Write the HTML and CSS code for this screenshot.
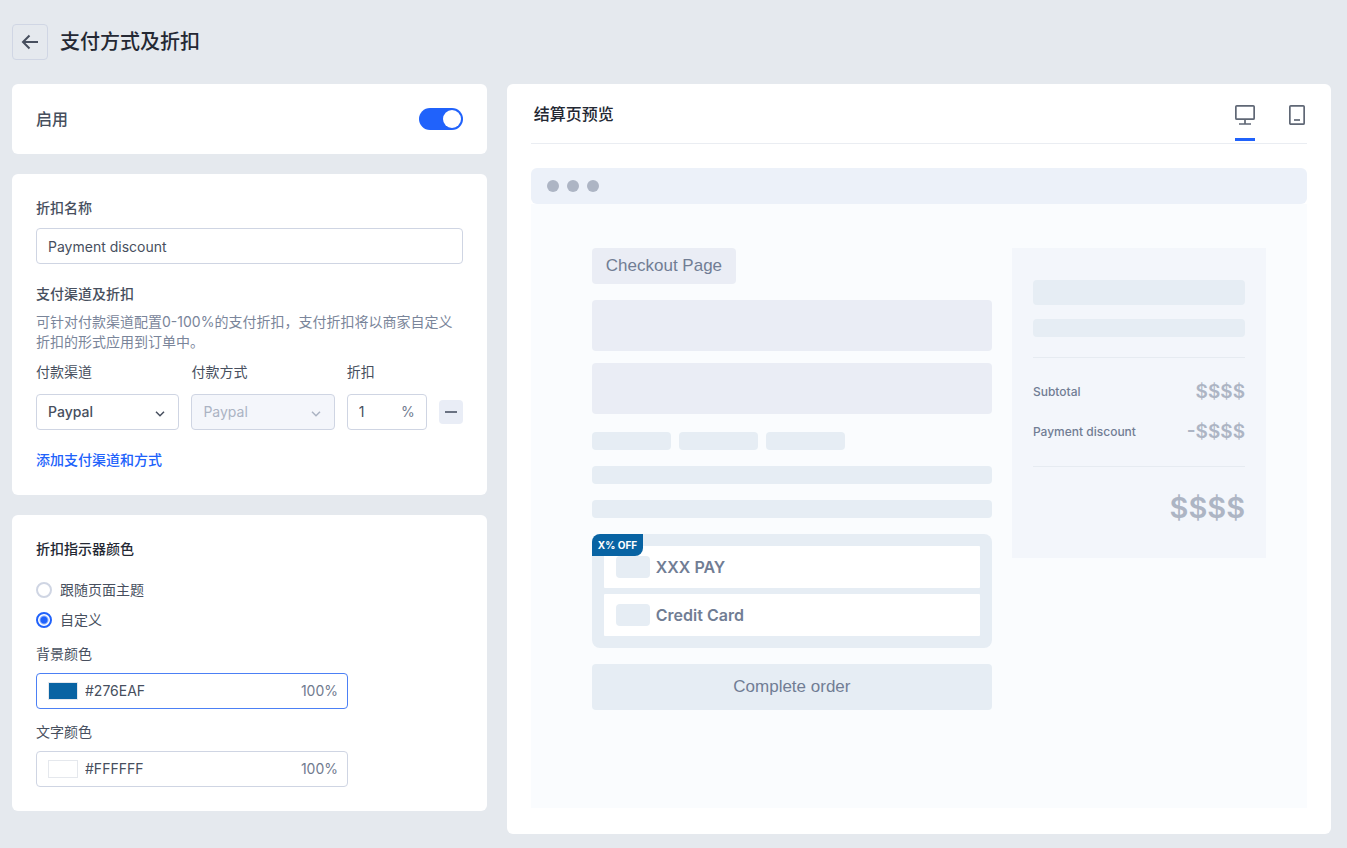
FILE: index.html
```html
<!DOCTYPE html>
<html lang="zh-CN">
<head>
    <meta charset="UTF-8">
    <title>支付方式及折扣</title>
    <link rel="stylesheet" href="styles.css">
</head>
<body>
<div class="page">
    <header class="header">
        <button class="back" type="button" aria-label="返回">
            <svg width="18" height="16" viewBox="0 0 18 16" fill="none" stroke="currentColor" stroke-width="2"><path d="M17 8H2M8.5 1.5L2 8L8.5 14.5"/></svg>
        </button>
        <h1>支付方式及折扣</h1>
    </header>

    <main class="main">
        <div class="settings">
            <section class="card enable">
                <label for="enable">启用</label>
                <input class="switch" type="checkbox" id="enable" checked>
            </section>

            <section class="card discount">
                <label class="label strong" for="name">折扣名称</label>
                <input class="text" type="text" id="name" value="Payment discount">

                <h2 class="sub-title">支付渠道及折扣</h2>
                <p class="desc">可针对付款渠道配置0-100%的支付折扣，支付折扣将以商家自定义折扣的形式应用到订单中。</p>
                <div class="channels">
                    <label for="channel">付款渠道</label>
                    <label for="method">付款方式</label>
                    <label for="rate">折扣</label>
                    <span></span>
                    <div class="select">
                        <select id="channel"><option>Paypal</option></select>
                        <svg width="10" height="6" viewBox="0 0 10 6" fill="none" stroke="currentColor" stroke-width="1.5"><path d="M1 .8L5 4.8L9 .8"/></svg>
                    </div>
                    <div class="select disabled">
                        <select id="method" disabled><option>Paypal</option></select>
                        <svg width="10" height="6" viewBox="0 0 10 6" fill="none" stroke="currentColor" stroke-width="1.5"><path d="M1 .8L5 4.8L9 .8"/></svg>
                    </div>
                    <div class="field rate">
                        <input type="text" id="rate" value="1">
                        <span>%</span>
                    </div>
                    <button class="remove" type="button" aria-label="删除"></button>
                </div>
                <a class="add" href="#">添加支付渠道和方式</a>
            </section>

            <section class="card colors">
                <h2>折扣指示器颜色</h2>
                <label class="radio"><input type="radio" name="theme">跟随页面主题</label>
                <label class="radio"><input type="radio" name="theme" checked>自定义</label>
                <label class="label" for="bg">背景颜色</label>
                <div class="field color active">
                    <input type="color" value="#0863a3" aria-label="背景颜色">
                    <input type="text" id="bg" value="#276EAF">
                    <span>100%</span>
                </div>
                <label class="label" for="fg">文字颜色</label>
                <div class="field color">
                    <input type="color" value="#ffffff" aria-label="文字颜色">
                    <input type="text" id="fg" value="#FFFFFF">
                    <span>100%</span>
                </div>
            </section>
        </div>

        <section class="card preview">
            <div class="preview-head">
                <h2>结算页预览</h2>
                <div class="tabs">
                    <button class="tab current" type="button" aria-label="桌面端">
                        <svg width="20" height="20" viewBox="0 0 20 20" fill="none" stroke="currentColor" stroke-width="1.7"><rect x=".85" y=".85" width="18.3" height="13.3" rx="1"/><path d="M10 14v5M4 19h12"/></svg>
                    </button>
                    <button class="tab" type="button" aria-label="移动端">
                        <svg width="20" height="20" viewBox="0 0 20 20" fill="none" stroke="currentColor" stroke-width="1.7"><rect x="2.85" y=".85" width="14.3" height="18.3" rx="1"/><path d="M7 15h6"/></svg>
                    </button>
                </div>
            </div>

            <div class="browser">
                <div class="bar"><i></i><i></i><i></i></div>
                <div class="body">
                    <div class="checkout">
                        <div class="tag">Checkout Page</div>
                        <div class="block"></div>
                        <div class="block"></div>
                        <div class="pills"><i></i><i></i><i></i></div>
                        <div class="line"></div>
                        <div class="line"></div>
                        <div class="pay">
                            <span class="badge">X% OFF</span>
                            <div class="pay-item"><i></i>XXX PAY</div>
                            <div class="pay-item"><i></i>Credit Card</div>
                        </div>
                        <div class="complete">Complete order</div>
                    </div>
                    <div class="summary">
                        <div class="line big"></div>
                        <div class="line"></div>
                        <div class="rows">
                            <div class="row"><span>Subtotal</span><b>$$$$</b></div>
                            <div class="row"><span>Payment discount</span><b>-$$$$</b></div>
                        </div>
                        <div class="total">$$$$</div>
                    </div>
                </div>
            </div>
        </section>
    </main>
</div>
</body>
</html>
```
FILE: styles.css
```css
*{
    margin: 0;
    padding: 0;
    box-sizing: border-box;
}
body{
    background: #e5e9ee;
    color: #474f5e;
    font: 14px/22px Inter, "Noto Sans CJK SC", sans-serif;
}
input, select, button{
    font: inherit;
    color: inherit;
    border: none;
    outline: none;
    background: none;
}
i{
    display: block;
}
svg{
    display: block;
}
.page{
    padding: 24px 16px 14px 12px;
}
.header{
    display: flex;
    align-items: center;
    gap: 12px;
    margin-bottom: 24px;
}
.header h1{
    font-size: 20px;
    line-height: 28px;
    font-weight: 500;
    color: #242833;
}
.back{
    width: 36px;
    height: 36px;
    border: 1px solid #d0d6e4;
    border-radius: 4px;
    display: flex;
    align-items: center;
    justify-content: center;
}
.main{
    display: flex;
    align-items: flex-start;
    gap: 20px;
}
.settings{
    width: 36%;
    display: flex;
    flex-direction: column;
    gap: 20px;
}
.card{
    background: #fff;
    border-radius: 6px;
    padding: 24px;
}
.card h2{
    font-size: 14px;
    line-height: 20px;
    font-weight: 500;
    color: #242833;
}

/* 启用开关 */
.enable{
    display: flex;
    justify-content: space-between;
    align-items: center;
    font-size: 16px;
    font-weight: 500;
}
.switch{
    appearance: none;
    width: 44px;
    height: 22px;
    padding: 2px;
    border-radius: 11px;
    background: #c4cad6;
    display: flex;
    cursor: pointer;
}
.switch::before{
    content: "";
    width: 18px;
    height: 18px;
    border-radius: 50%;
    background: #fff;
}
.switch:checked{
    background: #2062fb;
    justify-content: flex-end;
}

/* 折扣设置 */
.discount{
    padding-bottom: 25px;
    line-height: 20px;
}
.label{
    display: block;
}
.strong, .card .sub-title{
    font-weight: 500;
    color: #474f5e;
}
.text{
    display: block;
    width: 100%;
    height: 36px;
    margin: 10px 0 20px;
    padding: 0 11px;
    border: 1px solid #cfd5e3;
    border-radius: 4px;
}
.desc{
    margin: 8px 0 10px;
    color: #7a859a;
}
.channels{
    display: grid;
    grid-template-columns: 1fr 1fr 80px 24px;
    gap: 12px;
    align-items: center;
}
.select{
    position: relative;
}
.select select{
    appearance: none;
    display: block;
    width: 100%;
    height: 36px;
    padding: 0 11px;
    border: 1px solid #cfd5e3;
    border-radius: 4px;
    font-weight: 500;
    opacity: 1;
}
.select svg{
    position: absolute;
    right: 14px;
    top: 17px;
    pointer-events: none;
}
.select.disabled select{
    background: #f4f6fb;
    font-weight: 400;
}
.disabled{
    color: #abb3c3;
}
.field{
    display: flex;
    align-items: center;
    height: 36px;
    padding: 0 11px;
    border: 1px solid #cfd5e3;
    border-radius: 4px;
}
.field input[type=text]{
    flex: 1;
    min-width: 0;
}
.field span{
    color: #717b8f;
}
.remove{
    width: 24px;
    height: 24px;
    border-radius: 4px;
    background: #e9edf6;
}
.remove::before{
    content: "";
    display: block;
    width: 12px;
    height: 2px;
    margin: 0 auto;
    background: #6a7282;
}
.add{
    display: block;
    margin-top: 20px;
    color: #2062fb;
    font-weight: 500;
    text-decoration: none;
}

/* 颜色 */
.colors h2{
    margin-bottom: 20px;
}
.radio{
    display: flex;
    align-items: center;
    gap: 8px;
    margin-bottom: 8px;
}
.radio input{
    appearance: none;
    width: 16px;
    height: 16px;
    border: 2px solid #cfd5e3;
    border-radius: 50%;
}
.radio input:checked{
    border-color: #2062fb;
    background: radial-gradient(#2062fb 3px, #fff 5px);
}
.colors .label{
    margin: 12px 0 8px;
}
.color{
    width: 312px;
    max-width: 100%;
    gap: 7px;
    padding-right: 9px;
}
.color.active{
    border-color: #4c80f5;
}
.color input[type=color]{
    appearance: none;
    width: 30px;
    height: 18px;
    border: 1px solid #e5e8ed;
}
.color input::-webkit-color-swatch-wrapper{
    padding: 0;
}
.color input::-webkit-color-swatch{
    border: none;
}

/* 预览 */
.preview{
    flex: 1;
    padding: 0 24px 26px;
}
.preview-head{
    display: flex;
    justify-content: space-between;
    height: 60px;
    padding-left: 3px;
    margin-bottom: 24px;
    border-bottom: 1px solid #eaedf2;
}
.preview-head h2{
    font-size: 16px;
    line-height: 60px;
}
.tabs{
    display: flex;
    gap: 32px;
}
.tab{
    height: 57px;
    padding-top: 21px;
    color: #5f6775;
    border-bottom: 3px solid transparent;
    display: flex;
}
.current{
    border-color: #2062fb;
}
.bar{
    display: flex;
    align-items: center;
    gap: 8px;
    height: 36px;
    padding: 0 16px;
    border-radius: 6px;
    background: #ecf1f9;
}
.bar i{
    width: 12px;
    height: 12px;
    border-radius: 50%;
    background: #adb5c4;
}
.body{
    display: grid;
    grid-template-columns: 400fr 254fr;
    gap: 20px;
    align-items: start;
    padding: 44px 41px 98px 61px;
    background: #fafcfe;
    color: #717d94;
}
.tag, .complete{
    border-radius: 4px;
    font-family: "Liberation Sans", sans-serif;
    font-size: 17px;
}
.tag{
    width: fit-content;
    padding: 0 14px;
    background: #eaedf5;
    line-height: 36px;
    margin-bottom: 16px;
}
.block{
    height: 51px;
    margin-bottom: 12px;
    border-radius: 4px;
    background: #eaedf5;
}
.pills{
    display: flex;
    gap: 8px;
    margin: 18px 0 16px;
}
.pills i{
    width: 79px;
    height: 18px;
    border-radius: 4px;
    background: #e6edf4;
}
.line{
    height: 18px;
    margin-bottom: 16px;
    border-radius: 4px;
    background: #e6edf4;
}
.pay{
    position: relative;
    display: flex;
    flex-direction: column;
    gap: 6px;
    padding: 12px;
    border-radius: 8px;
    background: #e6edf4;
}
.badge{
    position: absolute;
    left: 0;
    top: 0;
    padding: 0 6px;
    border-radius: 8px 0;
    background: #0863a3;
    color: #fff;
    font-size: 10px;
    line-height: 22px;
    font-weight: 700;
}
.pay-item{
    display: flex;
    align-items: center;
    gap: 6px;
    padding: 10px 12px;
    border-radius: 1px;
    background: #fff;
    font-size: 16px;
    font-weight: 600;
}
.pay-item i{
    width: 34px;
    height: 22px;
    border-radius: 4px;
    background: #e6edf4;
}
.complete{
    margin-top: 16px;
    background: #e6edf4;
    line-height: 46px;
    text-align: center;
}
.summary{
    padding: 32px 21px;
    background: #f3f6fb;
}
.summary .big{
    height: 25px;
    margin-bottom: 14px;
}
.summary .line:nth-child(2){
    margin-bottom: 20px;
}
.rows{
    padding: 14px 0;
    border-top: 1px solid #e6ebf1;
    border-bottom: 1px solid #e6ebf1;
}
.row{
    display: flex;
    justify-content: space-between;
    font-size: 12px;
    line-height: 40px;
    font-weight: 500;
}
.row b{
    font-size: 19px;
    font-weight: 600;
    color: #adb5c4;
}
.total{
    padding-top: 23px;
    font-size: 29px;
    line-height: 36px;
    font-weight: 600;
    text-align: right;
    color: #adb5c4;
}
```
